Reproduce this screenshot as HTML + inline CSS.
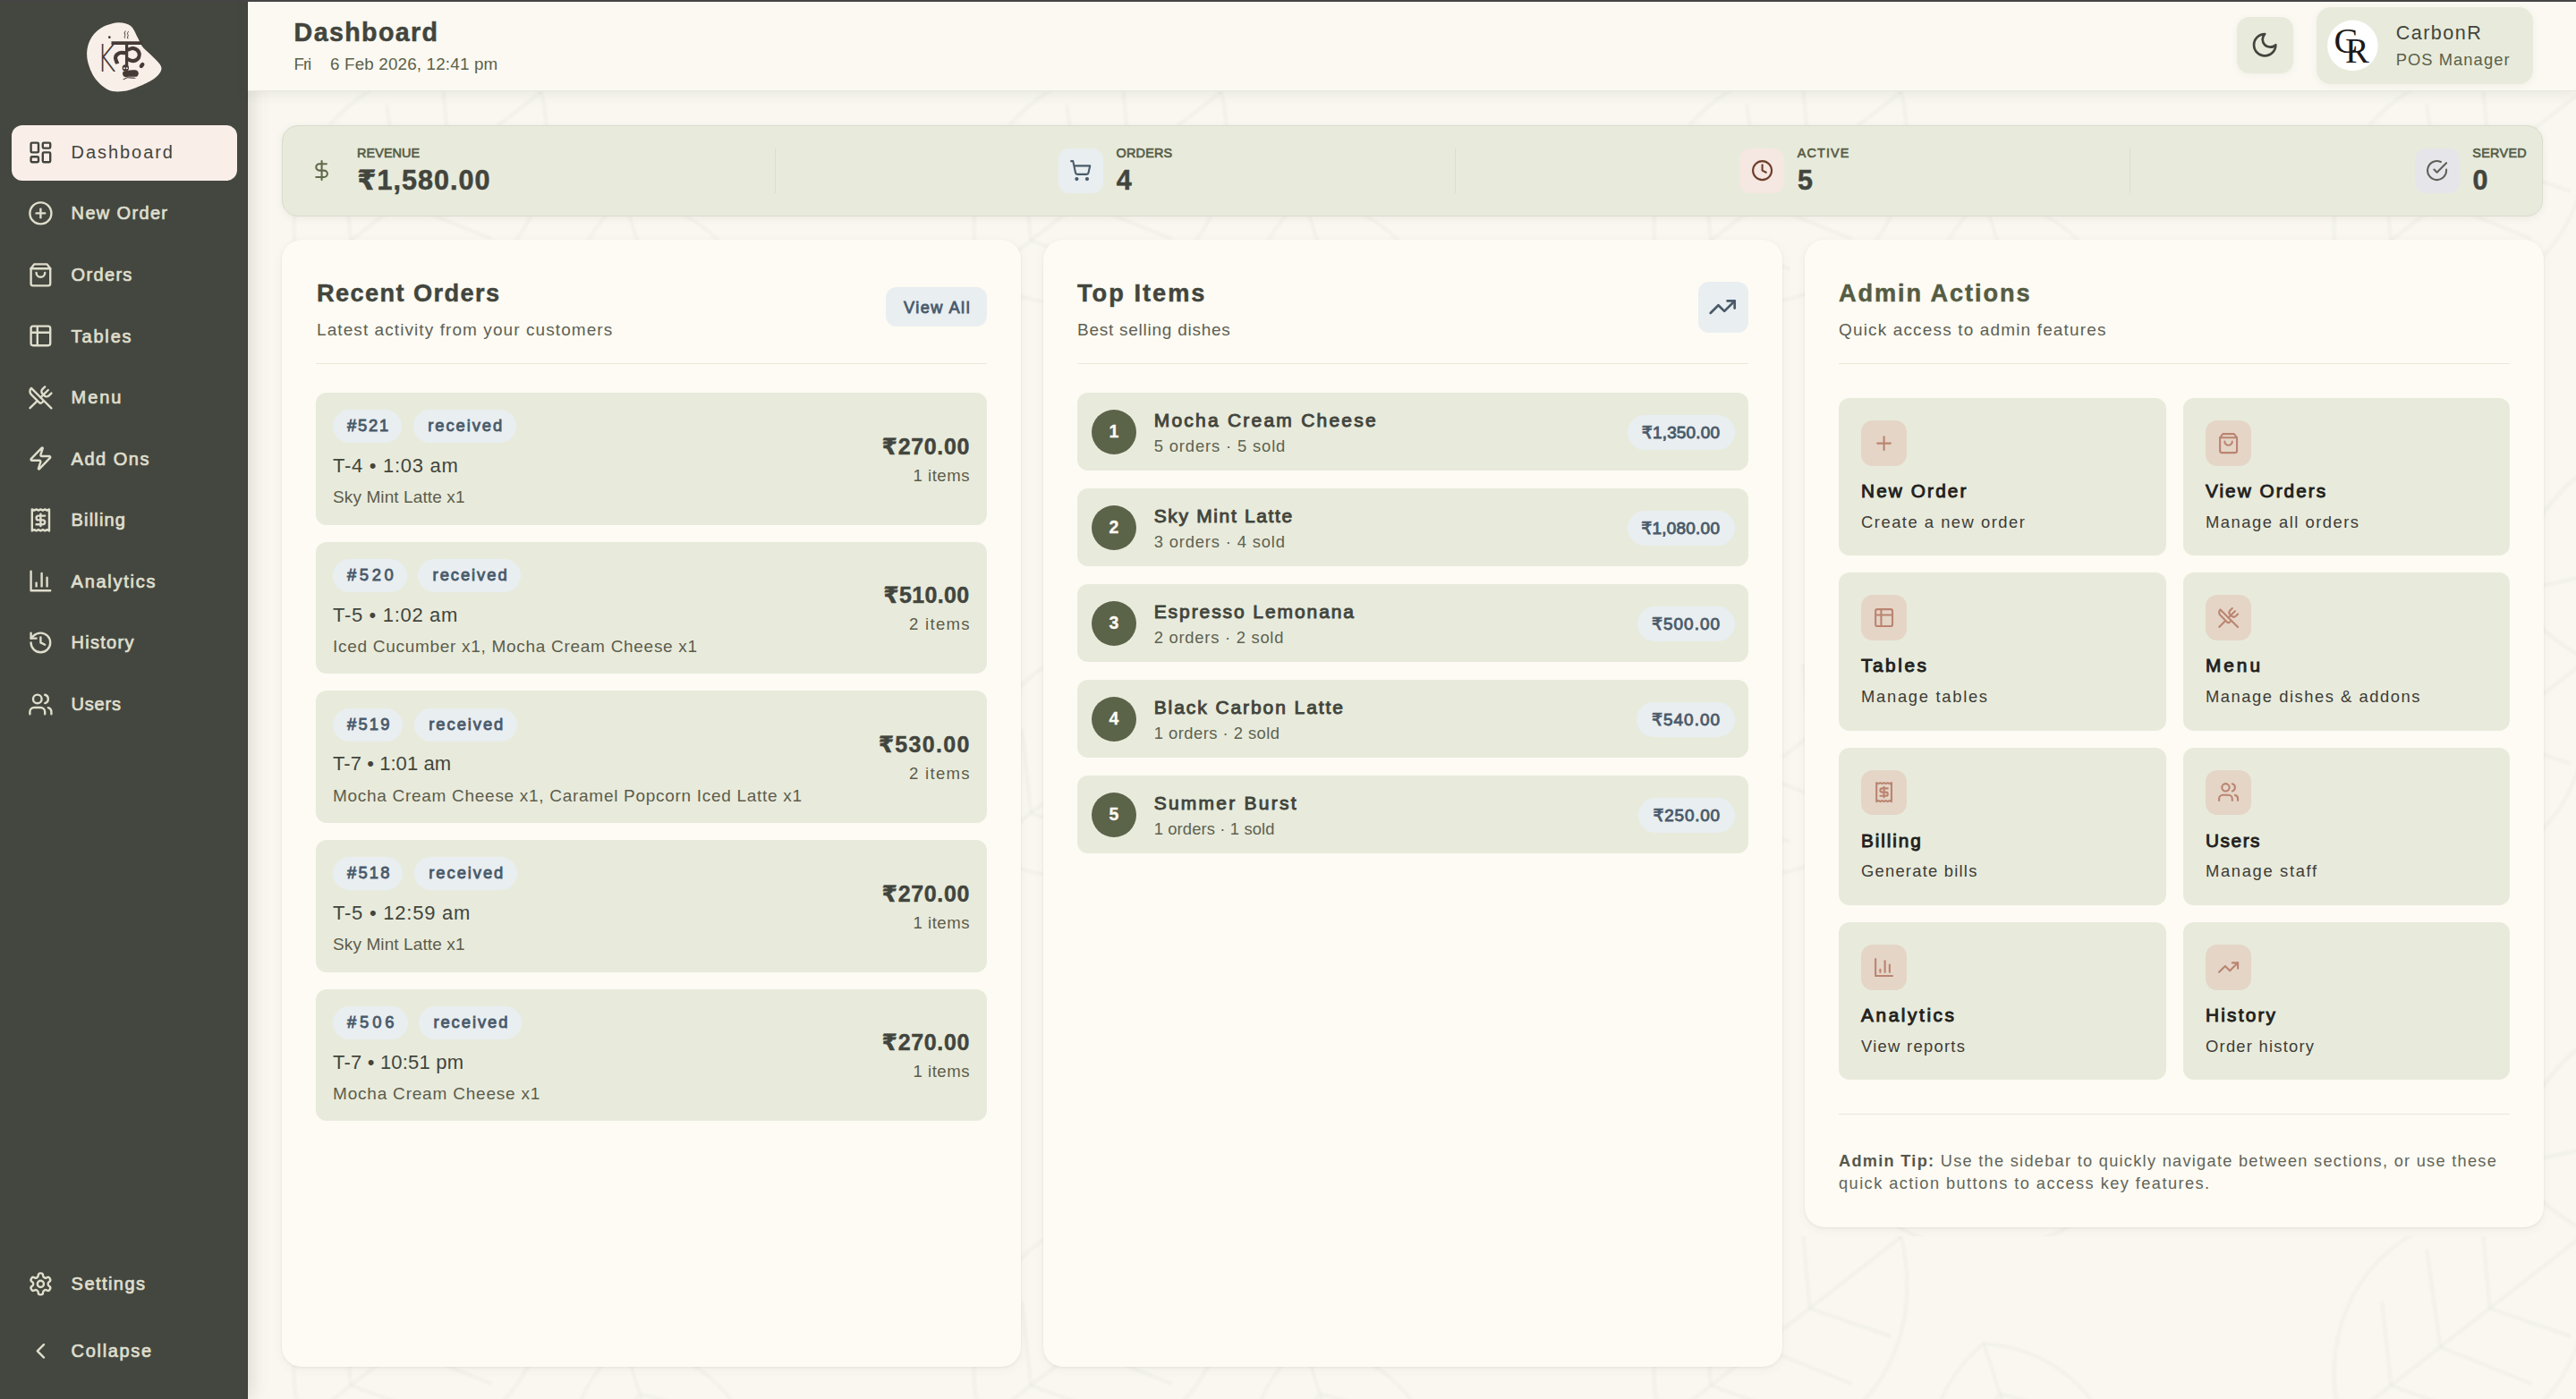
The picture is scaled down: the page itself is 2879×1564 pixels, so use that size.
<!DOCTYPE html>
<html lang="en">
<head>
<meta charset="utf-8">
<title>Dashboard</title>
<style>
html,body{margin:0;padding:0;background:#f9f7f0}
body{position:relative;width:2879px;height:1564px;overflow:hidden;background:#f9f7f0;font-family:"Liberation Sans","DejaVu Sans",sans-serif;-webkit-font-smoothing:antialiased}
.b{position:absolute;box-sizing:border-box}
.t{position:absolute;white-space:nowrap;margin:0}
.rs{font-family:"DejaVu Sans",sans-serif}
.ic{position:absolute;fill:none;stroke:currentColor;stroke-linecap:round;stroke-linejoin:round;overflow:visible}
.side{box-shadow:3px 0 20px rgba(70,75,50,.18)}
.head{border-bottom:1px solid #e9e8dd;box-shadow:0 3px 14px rgba(70,75,50,.09)}
.stats{border:1px solid #d9dccd;box-shadow:0 2px 8px rgba(90,85,60,.08)}
.card{box-shadow:0 1px 3px rgba(70,75,50,.08),0 3px 12px rgba(70,75,50,.05)}
.sh1{box-shadow:0 2px 8px rgba(90,85,60,.06)}
b{font-weight:700;color:#55574d}
</style>
</head>
<body>
<svg class="b" style="left:277px;top:102px;width:2602px;height:1462px" viewBox="0 0 2602 1462"><filter id="lfb" x="-10%" y="-10%" width="120%" height="120%"><feGaussianBlur stdDeviation="1.3"/></filter><pattern id="lfp" width="760" height="640" patternUnits="userSpaceOnUse"><g fill="none" stroke="#7d8064" stroke-opacity=".05" stroke-width="3.6" filter="url(#lfb)"><g transform="translate(60 210) rotate(-38)"><path d="M0 0C60-150 260-170 340 0C260 170 60 150 0 0Z"/><path d="M0 0H340"/><path d="M70 0 120-80M140 0 195-95M210 0 262-80M70 0 120 80M140 0 195 95M210 0 262 80"/></g><g transform="translate(420 120) rotate(72) scale(.85)"><path d="M0 0C60-150 260-170 340 0C260 170 60 150 0 0Z"/><path d="M0 0H340"/><path d="M70 0 120-80M140 0 195-95M210 0 262-80M70 0 120 80M140 0 195 95M210 0 262 80"/></g><g transform="translate(250 560) rotate(-12) scale(1.1)"><path d="M0 0C60-150 260-170 340 0C260 170 60 150 0 0Z"/><path d="M0 0H340"/><path d="M70 0 120-80M140 0 195-95M210 0 262-80M70 0 120 80M140 0 195 95M210 0 262 80"/></g><g transform="translate(700 520) rotate(200) scale(.8)"><path d="M0 0C60-150 260-170 340 0C260 170 60 150 0 0Z"/><path d="M0 0H340"/><path d="M70 0 120-80M140 0 195-95M210 0 262-80M70 0 120 80M140 0 195 95M210 0 262 80"/></g></g></pattern><rect width="2602" height="1462" fill="url(#lfp)"/></svg>
<aside>
<div class="b side" style="left:0.0px;top:0.0px;width:277.0px;height:1564.0px;background:#44473f;border-right:1px solid #393c35;"></div>
<svg class="b" style="left:90px;top:20px;width:100px;height:90px" viewBox="90 20 100 90"><path d="M131.2 25.3C136.8 24.8 142.1 26.1 145.8 28.7C149.5 31.4 151.4 37.4 153.5 41.2C155.7 45.0 156.4 48.3 158.7 51.5C160.9 54.6 163.9 56.6 167.2 60.1C170.6 63.5 176.7 68.8 178.8 72.1C180.9 75.4 180.9 77.1 179.7 79.8C178.5 82.5 175.7 85.5 171.5 88.4C167.3 91.2 160.1 94.7 154.4 96.9C148.7 99.2 142.9 101.6 137.2 102.1C131.5 102.6 125.4 102.7 120.1 99.9C114.7 97.2 108.8 91.7 105.0 85.8C101.3 79.9 98.1 71.1 97.3 64.3C96.5 57.6 97.8 50.9 100.3 45.5C102.8 40.0 107.2 35.1 112.3 31.7C117.5 28.4 125.6 25.8 131.2 25.3Z" fill="#f8efe9"/><g fill="none" stroke="#463a36" stroke-linecap="round" stroke-linejoin="round"><path stroke-width="3.6" stroke-linecap="butt" d="M124.5 48.1H158.8"/><path stroke-width="3.3" stroke-linecap="butt" d="M141.6 49V75"/><path stroke-width="4.2" stroke-linecap="butt" d="M142.4 55.8C143.5 55.5 147.1 53.6 149.2 54.0C151.4 54.5 154.4 56.5 155.2 58.3C156.1 60.2 155.5 63.6 154.4 65.2C153.2 66.8 150.4 68.1 148.4 68.2C146.4 68.3 143.4 66.4 142.4 66.1"/><path stroke-width="4.2" stroke-linecap="butt" d="M140.2 59.2C139.1 59.2 135.6 58.4 133.8 59.2C131.9 60.0 129.5 61.9 129.1 63.9C128.6 65.9 130.9 70.0 131.2 71.2"/><path stroke-width="1" d="M139.5 42.5c-1.5-1.5 1.5-3 0-4.5s1-2.5 .8-3.2M142.8 43c-1.5-1.5 1.5-3 0-4.5s1-2.5 .8-3.2"/><path stroke-width="1.1" d="M138.1 88.8C138.8 88.5 140.2 87.1 142.4 86.8C144.5 86.6 149.5 87.3 150.9 87.3"/></g><text x="0" y="0" transform="translate(108.2 79.6) scale(.74 1)" font-family="DejaVu Sans Light,DejaVu Sans,sans-serif" font-weight="200" font-size="43.5" fill="#463a36">K</text><g fill="#463a36"><circle cx="140.3" cy="76" r="3.7"/><path d="M137.6 80.2C138.9 79.1 143.4 78.8 145.8 78.5C148.2 78.2 150.7 78.0 152.2 78.5C153.7 79.0 154.7 80.4 154.8 81.5C154.9 82.6 154.6 84.6 153.1 85.4C151.6 86.1 148.2 85.8 145.8 85.8C143.4 85.8 139.9 86.3 138.5 85.4C137.1 84.4 136.4 81.4 137.6 80.2Z"/><ellipse cx="158.6" cy="73" rx="2.3" ry="3.4" transform="rotate(35 158.6 73)"/><circle cx="122.3" cy="41.7" r="1.4"/></g><g fill="#f8efe9"><circle cx="138.9" cy="76.3" r="1"/><circle cx="141.8" cy="76.3" r="1"/></g></svg>
<nav>
<div class="b" style="left:13.0px;top:140.0px;width:252.0px;height:62.0px;background:#faeee9;border-radius:12px;"></div>
<svg class="ic" style="left:30.7px;top:155.6px;width:28.8px;height:28.8px;color:#42453d;stroke-width:2" viewBox="0 0 24 24"><rect width="7" height="9" x="3" y="3" rx="1"/><rect width="7" height="5" x="14" y="3" rx="1"/><rect width="7" height="9" x="14" y="12" rx="1"/><rect width="7" height="5" x="3" y="16" rx="1"/></svg>
<div id="t1" class="t" style="top:160px;font-size:20.0px;line-height:20.0px;color:#42453d;letter-spacing:1.94px;left:79.6px;">Dashboard</div>
<svg class="ic" style="left:30.7px;top:224.2px;width:28.8px;height:28.8px;color:#dfdecd;stroke-width:2" viewBox="0 0 24 24"><circle cx="12" cy="12" r="10"/><path d="M8 12h8"/><path d="M12 8v8"/></svg>
<div id="t2" class="t" style="top:228px;font-size:20.0px;line-height:20.0px;-webkit-text-stroke:0.72px currentColor;color:#dfdecd;letter-spacing:1.34px;left:79.6px;">New Order</div>
<svg class="ic" style="left:30.7px;top:292.7px;width:28.8px;height:28.8px;color:#dfdecd;stroke-width:2" viewBox="0 0 24 24"><path d="M6 2 3 6v14a2 2 0 0 0 2 2h14a2 2 0 0 0 2-2V6l-3-4Z"/><path d="M3 6h18"/><path d="M16 10a4 4 0 0 1-8 0"/></svg>
<div id="t3" class="t" style="top:297px;font-size:20.0px;line-height:20.0px;-webkit-text-stroke:0.72px currentColor;color:#dfdecd;letter-spacing:1.33px;left:79.6px;">Orders</div>
<svg class="ic" style="left:30.7px;top:361.2px;width:28.8px;height:28.8px;color:#dfdecd;stroke-width:2" viewBox="0 0 24 24"><path d="M9 3H5a2 2 0 0 0-2 2v4m6-6h10a2 2 0 0 1 2 2v4M9 3v18m0 0h10a2 2 0 0 0 2-2V9M9 21H5a2 2 0 0 1-2-2V9m0 0h18"/></svg>
<div id="t4" class="t" style="top:366px;font-size:20.0px;line-height:20.0px;-webkit-text-stroke:0.72px currentColor;color:#dfdecd;letter-spacing:1.84px;left:79.6px;">Tables</div>
<svg class="ic" style="left:30.7px;top:429.8px;width:28.8px;height:28.8px;color:#dfdecd;stroke-width:2" viewBox="0 0 24 24"><path d="m16 2-2.3 2.3a3 3 0 0 0 0 4.2l1.8 1.8a3 3 0 0 0 4.2 0L22 8"/><path d="M15 15 3.3 3.3a4.2 4.2 0 0 0 0 6l7.3 7.3c.7.7 2 .7 2.8 0L15 15Zm0 0 7 7"/><path d="m2.1 21.8 6.4-6.3"/><path d="m19 5-7 7"/></svg>
<div id="t5" class="t" style="top:434px;font-size:20.0px;line-height:20.0px;-webkit-text-stroke:0.72px currentColor;color:#dfdecd;letter-spacing:1.92px;left:79.6px;">Menu</div>
<svg class="ic" style="left:30.7px;top:498.4px;width:28.8px;height:28.8px;color:#dfdecd;stroke-width:2" viewBox="0 0 24 24"><path d="M4 14a1 1 0 0 1-.78-1.63l9.9-10.2a.5.5 0 0 1 .86.46l-1.92 6.02A1 1 0 0 0 13 10h7a1 1 0 0 1 .78 1.63l-9.9 10.2a.5.5 0 0 1-.86-.46l1.92-6.02A1 1 0 0 0 11 14z"/></svg>
<div id="t6" class="t" style="top:503px;font-size:20.0px;line-height:20.0px;-webkit-text-stroke:0.72px currentColor;color:#dfdecd;letter-spacing:1.50px;left:79.6px;">Add Ons</div>
<svg class="ic" style="left:30.7px;top:566.9px;width:28.8px;height:28.8px;color:#dfdecd;stroke-width:2" viewBox="0 0 24 24"><path d="M4 2v20l2-1 2 1 2-1 2 1 2-1 2 1 2-1 2 1V2l-2 1-2-1-2 1-2-1-2 1-2-1-2 1Z"/><path d="M16 8h-6a2 2 0 1 0 0 4h4a2 2 0 1 1 0 4H8"/><path d="M12 17.5v-11"/></svg>
<div id="t7" class="t" style="top:571px;font-size:20.0px;line-height:20.0px;-webkit-text-stroke:0.72px currentColor;color:#dfdecd;letter-spacing:1.16px;left:79.6px;">Billing</div>
<svg class="ic" style="left:30.7px;top:635.4px;width:28.8px;height:28.8px;color:#dfdecd;stroke-width:2" viewBox="0 0 24 24"><path d="M3 3v18h18"/><path d="M18 17V9"/><path d="M13 17V5"/><path d="M8 17v-3"/></svg>
<div id="t8" class="t" style="top:640px;font-size:20.0px;line-height:20.0px;-webkit-text-stroke:0.72px currentColor;color:#dfdecd;letter-spacing:1.72px;left:79.6px;">Analytics</div>
<svg class="ic" style="left:30.7px;top:704.0px;width:28.8px;height:28.8px;color:#dfdecd;stroke-width:2" viewBox="0 0 24 24"><path d="M3 12a9 9 0 1 0 9-9 9.75 9.75 0 0 0-6.74 2.74L3 8"/><path d="M3 3v5h5"/><path d="M12 7v5l4 2"/></svg>
<div id="t9" class="t" style="top:708px;font-size:20.0px;line-height:20.0px;-webkit-text-stroke:0.72px currentColor;color:#dfdecd;letter-spacing:1.26px;left:79.6px;">History</div>
<svg class="ic" style="left:30.7px;top:772.5px;width:28.8px;height:28.8px;color:#dfdecd;stroke-width:2" viewBox="0 0 24 24"><path d="M16 21v-2a4 4 0 0 0-4-4H6a4 4 0 0 0-4 4v2"/><circle cx="9" cy="7" r="4"/><path d="M22 21v-2a4 4 0 0 0-3-3.87"/><path d="M16 3.13a4 4 0 0 1 0 7.75"/></svg>
<div id="t10" class="t" style="top:777px;font-size:20.0px;line-height:20.0px;-webkit-text-stroke:0.72px currentColor;color:#dfdecd;letter-spacing:0.77px;left:79.6px;">Users</div>
</nav>
<svg class="ic" style="left:30.7px;top:1420.7px;width:28.8px;height:28.8px;color:#dfdecd;stroke-width:2" viewBox="0 0 24 24"><path d="M12.22 2h-.44a2 2 0 0 0-2 2v.18a2 2 0 0 1-1 1.73l-.43.25a2 2 0 0 1-2 0l-.15-.08a2 2 0 0 0-2.73.73l-.22.38a2 2 0 0 0 .73 2.73l.15.1a2 2 0 0 1 1 1.72v.51a2 2 0 0 1-1 1.74l-.15.09a2 2 0 0 0-.73 2.73l.22.38a2 2 0 0 0 2.73.73l.15-.08a2 2 0 0 1 2 0l.43.25a2 2 0 0 1 1 1.73V20a2 2 0 0 0 2 2h.44a2 2 0 0 0 2-2v-.18a2 2 0 0 1 1-1.73l.43-.25a2 2 0 0 1 2 0l.15.08a2 2 0 0 0 2.73-.73l.22-.39a2 2 0 0 0-.73-2.73l-.15-.08a2 2 0 0 1-1-1.74v-.5a2 2 0 0 1 1-1.74l.15-.09a2 2 0 0 0 .73-2.73l-.22-.38a2 2 0 0 0-2.73-.73l-.15.08a2 2 0 0 1-2 0l-.43-.25a2 2 0 0 1-1-1.73V4a2 2 0 0 0-2-2z"/><circle cx="12" cy="12" r="3"/></svg>
<div id="t11" class="t" style="top:1425px;font-size:20.0px;line-height:20.0px;-webkit-text-stroke:0.72px currentColor;color:#dfdecd;letter-spacing:1.45px;left:79.6px;">Settings</div>
<svg class="ic" style="left:30.8px;top:1495.9px;width:28.8px;height:28.8px;color:#dfdecd;stroke-width:2" viewBox="0 0 24 24"><path d="m15 18-6-6 6-6"/></svg>
<div id="t12" class="t" style="top:1500px;font-size:20.0px;line-height:20.0px;-webkit-text-stroke:0.72px currentColor;color:#dfdecd;letter-spacing:1.68px;left:79.6px;">Collapse</div>
</aside>
<header>
<div class="b head" style="left:277.0px;top:0.0px;width:2602.0px;height:102.0px;background:#fbf9f2;"></div>
<div id="t13" class="t" style="top:22px;font-size:28.6px;line-height:28.6px;font-weight:700;-webkit-text-stroke:0.49px currentColor;color:#42453d;letter-spacing:1.39px;left:328.6px;">Dashboard</div>
<div id="t14" class="t" style="top:63px;font-size:18.8px;line-height:18.8px;color:#5b6149;letter-spacing:-1.10px;left:328.6px;">Fri</div>
<div id="t15" class="t" style="top:63px;font-size:18.8px;line-height:18.8px;color:#5b6149;letter-spacing:0.18px;left:369.0px;">6 Feb 2026, 12:41 pm</div>
<div class="b sh1" style="left:2500.0px;top:19.0px;width:63.0px;height:63.0px;background:#e8ebdc;border-radius:14px;"></div>
<svg class="ic" style="left:2515.3px;top:34.3px;width:32.4px;height:32.4px;color:#42453d;stroke-width:2" viewBox="0 0 24 24"><path d="M12 3a6 6 0 0 0 9 9 9 9 0 1 1-9-9Z"/></svg>
<div class="b sh1" style="left:2589.0px;top:8.0px;width:242.0px;height:86.0px;background:#e8ebdc;border-radius:16px;"></div>
<svg class="b" style="left:2600px;top:22px;width:59px;height:58px" viewBox="2600 22 59 58"><circle cx="2629.4" cy="50.9" r="28.3" fill="#fff"/><g font-family="Liberation Serif,DejaVu Serif,serif" font-size="40" fill="#1c1919"><text x="2608.6" y="58.6">C</text><text x="2621" y="70.2">R</text></g></svg>
<div id="t16" class="t" style="top:26px;font-size:21.6px;line-height:21.6px;color:#42453d;letter-spacing:1.45px;left:2677.7px;">CarbonR</div>
<div id="t17" class="t" style="top:58px;font-size:18.4px;line-height:18.4px;color:#5b6149;letter-spacing:1.03px;left:2677.7px;">POS Manager</div>
</header>
<div class="b" style="left:0.0px;top:0.0px;width:2879.0px;height:1.9px;background:#474446;"></div>
<main>
<section>
<div class="b stats" style="left:315.0px;top:140.0px;width:2527.0px;height:101.5px;background:#e8ebdc;border-radius:18px;"></div>
<svg class="ic" style="left:346.9px;top:178.0px;width:25.2px;height:25.2px;color:#5f6a4b;stroke-width:2" viewBox="0 0 24 24"><path d="M12 2v20"/><path d="M17 5H9.5a3.5 3.5 0 0 0 0 7h5a3.5 3.5 0 0 1 0 7H6"/></svg>
<div id="t18" class="t" style="top:164px;font-size:14.4px;line-height:14.4px;-webkit-text-stroke:0.65px currentColor;color:#565c45;letter-spacing:0.10px;left:399.0px;">REVENUE</div>
<div id="t19" class="t" style="top:186px;font-size:30.5px;line-height:30.5px;font-weight:700;-webkit-text-stroke:0.52px currentColor;color:#42453d;letter-spacing:1.05px;left:399.2px;"><span class="rs">₹</span>1,580.00</div>
<div class="b" style="left:1183.0px;top:165.8px;width:50.0px;height:50.0px;background:#e9eef1;border-radius:12px;"></div>
<svg class="ic" style="left:1195.4px;top:178.0px;width:25.2px;height:25.2px;color:#495a6a;stroke-width:2" viewBox="0 0 24 24"><circle cx="8" cy="21" r="1"/><circle cx="19" cy="21" r="1"/><path d="M2.05 2.05h2l2.66 12.42a2 2 0 0 0 2 1.58h9.78a2 2 0 0 0 1.95-1.57l1.65-7.43H5.12"/></svg>
<div id="t20" class="t" style="top:164px;font-size:14.4px;line-height:14.4px;-webkit-text-stroke:0.65px currentColor;color:#565c45;letter-spacing:0.22px;left:1247.5px;">ORDERS</div>
<div id="t21" class="t" style="top:186px;font-size:30.5px;line-height:30.5px;font-weight:700;-webkit-text-stroke:0.52px currentColor;color:#42453d;left:1247.7px;">4</div>
<div class="b" style="left:1944.3px;top:165.8px;width:50.0px;height:50.0px;background:#f5e7e1;border-radius:12px;"></div>
<svg class="ic" style="left:1956.7px;top:178.0px;width:25.2px;height:25.2px;color:#6e3d2c;stroke-width:2" viewBox="0 0 24 24"><circle cx="12" cy="12" r="10"/><path d="M12 6v6l4 2"/></svg>
<div id="t22" class="t" style="top:164px;font-size:14.4px;line-height:14.4px;-webkit-text-stroke:0.65px currentColor;color:#565c45;letter-spacing:1.10px;left:2008.8px;">ACTIVE</div>
<div id="t23" class="t" style="top:186px;font-size:30.5px;line-height:30.5px;font-weight:700;-webkit-text-stroke:0.52px currentColor;color:#42453d;left:2009.0px;">5</div>
<div class="b" style="left:2698.8px;top:165.8px;width:50.0px;height:50.0px;background:#e6e5ea;border-radius:12px;"></div>
<svg class="ic" style="left:2711.2px;top:178.0px;width:25.2px;height:25.2px;color:#5d6058;stroke-width:2" viewBox="0 0 24 24"><path d="M22 11.08V12a10 10 0 1 1-5.93-9.14"/><path d="m9 11 3 3L22 4"/></svg>
<div id="t24" class="t" style="top:164px;font-size:14.4px;line-height:14.4px;-webkit-text-stroke:0.65px currentColor;color:#565c45;letter-spacing:0.30px;left:2763.3px;">SERVED</div>
<div id="t25" class="t" style="top:186px;font-size:30.5px;line-height:30.5px;font-weight:700;-webkit-text-stroke:0.52px currentColor;color:#42453d;left:2763.5px;">0</div>
<div class="b" style="left:865.5px;top:166.0px;width:1.5px;height:50.0px;background:#d7dfd6;"></div>
<div class="b" style="left:1625.5px;top:166.0px;width:1.5px;height:50.0px;background:#d7dfd6;"></div>
<div class="b" style="left:2379.5px;top:166.0px;width:1.5px;height:50.0px;background:#d7dfd6;"></div>
</section>
<section>
<div class="b card" style="left:315.0px;top:268.0px;width:826.0px;height:1259.5px;background:#fdfbf3;border-radius:22px;"></div>
<div id="t26" class="t" style="top:314px;font-size:27.2px;line-height:27.2px;font-weight:700;-webkit-text-stroke:0.46px currentColor;color:#42453d;letter-spacing:1.39px;left:354.0px;">Recent Orders</div>
<div id="t27" class="t" style="top:359px;font-size:19.0px;line-height:19.0px;color:#5d6053;letter-spacing:1.08px;left:354.0px;">Latest activity from your customers</div>
<div class="b" style="left:989.7px;top:321.0px;width:113.0px;height:44.0px;background:#e9eef1;border-radius:12px;"></div>
<div id="t28" class="t" style="top:335px;font-size:18.2px;line-height:18.2px;-webkit-text-stroke:0.82px currentColor;color:#495a6a;letter-spacing:1.49px;left:1009.9px;">View All</div>
<div class="b" style="left:353.0px;top:406.0px;width:749.7px;height:1.2px;background:#e9e7dc;"></div>
<article>
<div class="b" style="left:353.0px;top:439.0px;width:749.7px;height:147.6px;background:#e8ebdc;border-radius:12px;"></div>
<div class="b" style="left:372.0px;top:458.3px;width:77.3px;height:37.0px;background:#e9eef1;border-radius:19px;"></div>
<div id="t29" class="t" style="top:467px;font-size:18.4px;line-height:18.4px;-webkit-text-stroke:0.83px currentColor;color:#495a6a;letter-spacing:1.79px;left:388.0px;">#521</div>
<div class="b" style="left:461.7px;top:458.3px;width:115.2px;height:37.0px;background:#e9eef1;border-radius:19px;"></div>
<div id="t30" class="t" style="top:467px;font-size:18.4px;line-height:18.4px;-webkit-text-stroke:0.83px currentColor;color:#495a6a;letter-spacing:1.93px;left:478.2px;">received</div>
<div id="t31" class="t" style="top:510px;font-size:22.0px;line-height:22.0px;color:#42453d;letter-spacing:0.72px;left:372.0px;">T-4 • 1:03 am</div>
<div id="t32" class="t" style="top:546px;font-size:19.0px;line-height:19.0px;color:#5d5c4b;letter-spacing:0.11px;left:372.0px;">Sky Mint Latte x1</div>
<div id="t33" class="t" style="top:487px;font-size:25.0px;line-height:25.0px;font-weight:700;-webkit-text-stroke:0.43px currentColor;color:#42453d;letter-spacing:0.65px;right:1795.0px;"><span class="rs">₹</span>270.00</div>
<div id="t34" class="t" style="top:523px;font-size:18.6px;line-height:18.6px;color:#5e5c49;letter-spacing:0.51px;right:1795.0px;">1 items</div>
</article>
<article>
<div class="b" style="left:353.0px;top:605.7px;width:749.7px;height:147.6px;background:#e8ebdc;border-radius:12px;"></div>
<div class="b" style="left:372.0px;top:625.0px;width:82.7px;height:37.0px;background:#e9eef1;border-radius:19px;"></div>
<div id="t35" class="t" style="top:634px;font-size:18.4px;line-height:18.4px;-webkit-text-stroke:0.83px currentColor;color:#495a6a;letter-spacing:3.59px;left:388.0px;">#520</div>
<div class="b" style="left:467.1px;top:625.0px;width:115.2px;height:37.0px;background:#e9eef1;border-radius:19px;"></div>
<div id="t36" class="t" style="top:634px;font-size:18.4px;line-height:18.4px;-webkit-text-stroke:0.83px currentColor;color:#495a6a;letter-spacing:1.93px;left:483.6px;">received</div>
<div id="t37" class="t" style="top:677px;font-size:22.0px;line-height:22.0px;color:#42453d;letter-spacing:0.68px;left:372.0px;">T-5 • 1:02 am</div>
<div id="t38" class="t" style="top:713px;font-size:19.0px;line-height:19.0px;color:#5d5c4b;letter-spacing:0.71px;left:372.0px;">Iced Cucumber x1, Mocha Cream Cheese x1</div>
<div id="t39" class="t" style="top:653px;font-size:25.0px;line-height:25.0px;font-weight:700;-webkit-text-stroke:0.43px currentColor;color:#42453d;letter-spacing:0.34px;right:1795.4px;"><span class="rs">₹</span>510.00</div>
<div id="t40" class="t" style="top:689px;font-size:18.6px;line-height:18.6px;color:#5e5c49;letter-spacing:1.26px;right:1794.2px;">2 items</div>
</article>
<article>
<div class="b" style="left:353.0px;top:772.4px;width:749.7px;height:147.6px;background:#e8ebdc;border-radius:12px;"></div>
<div class="b" style="left:372.0px;top:791.7px;width:78.4px;height:37.0px;background:#e9eef1;border-radius:19px;"></div>
<div id="t41" class="t" style="top:801px;font-size:18.4px;line-height:18.4px;-webkit-text-stroke:0.83px currentColor;color:#495a6a;letter-spacing:2.16px;left:388.0px;">#519</div>
<div class="b" style="left:462.8px;top:791.7px;width:115.2px;height:37.0px;background:#e9eef1;border-radius:19px;"></div>
<div id="t42" class="t" style="top:801px;font-size:18.4px;line-height:18.4px;-webkit-text-stroke:0.83px currentColor;color:#495a6a;letter-spacing:1.93px;left:479.3px;">received</div>
<div id="t43" class="t" style="top:843px;font-size:22.0px;line-height:22.0px;color:#42453d;letter-spacing:0.07px;left:372.0px;">T-7 • 1:01 am</div>
<div id="t44" class="t" style="top:880px;font-size:19.0px;line-height:19.0px;color:#5d5c4b;letter-spacing:0.71px;left:372.0px;">Mocha Cream Cheese x1, Caramel Popcorn Iced Latte x1</div>
<div id="t45" class="t" style="top:820px;font-size:25.0px;line-height:25.0px;font-weight:700;-webkit-text-stroke:0.43px currentColor;color:#42453d;letter-spacing:1.30px;right:1794.4px;"><span class="rs">₹</span>530.00</div>
<div id="t46" class="t" style="top:856px;font-size:18.6px;line-height:18.6px;color:#5e5c49;letter-spacing:1.26px;right:1794.2px;">2 items</div>
</article>
<article>
<div class="b" style="left:353.0px;top:939.1px;width:749.7px;height:147.6px;background:#e8ebdc;border-radius:12px;"></div>
<div class="b" style="left:372.0px;top:958.4px;width:78.4px;height:37.0px;background:#e9eef1;border-radius:19px;"></div>
<div id="t47" class="t" style="top:967px;font-size:18.4px;line-height:18.4px;-webkit-text-stroke:0.83px currentColor;color:#495a6a;letter-spacing:2.16px;left:388.0px;">#518</div>
<div class="b" style="left:462.8px;top:958.4px;width:115.2px;height:37.0px;background:#e9eef1;border-radius:19px;"></div>
<div id="t48" class="t" style="top:967px;font-size:18.4px;line-height:18.4px;-webkit-text-stroke:0.83px currentColor;color:#495a6a;letter-spacing:1.93px;left:479.3px;">received</div>
<div id="t49" class="t" style="top:1010px;font-size:22.0px;line-height:22.0px;color:#42453d;letter-spacing:0.76px;left:372.0px;">T-5 • 12:59 am</div>
<div id="t50" class="t" style="top:1046px;font-size:19.0px;line-height:19.0px;color:#5d5c4b;letter-spacing:0.11px;left:372.0px;">Sky Mint Latte x1</div>
<div id="t51" class="t" style="top:987px;font-size:25.0px;line-height:25.0px;font-weight:700;-webkit-text-stroke:0.43px currentColor;color:#42453d;letter-spacing:0.65px;right:1795.0px;"><span class="rs">₹</span>270.00</div>
<div id="t52" class="t" style="top:1023px;font-size:18.6px;line-height:18.6px;color:#5e5c49;letter-spacing:0.51px;right:1795.0px;">1 items</div>
</article>
<article>
<div class="b" style="left:353.0px;top:1105.8px;width:749.7px;height:147.6px;background:#e8ebdc;border-radius:12px;"></div>
<div class="b" style="left:372.0px;top:1125.1px;width:83.5px;height:37.0px;background:#e9eef1;border-radius:19px;"></div>
<div id="t53" class="t" style="top:1134px;font-size:18.4px;line-height:18.4px;-webkit-text-stroke:0.83px currentColor;color:#495a6a;letter-spacing:3.86px;left:388.0px;">#506</div>
<div class="b" style="left:467.9px;top:1125.1px;width:115.2px;height:37.0px;background:#e9eef1;border-radius:19px;"></div>
<div id="t54" class="t" style="top:1134px;font-size:18.4px;line-height:18.4px;-webkit-text-stroke:0.83px currentColor;color:#495a6a;letter-spacing:1.93px;left:484.4px;">received</div>
<div id="t55" class="t" style="top:1177px;font-size:22.0px;line-height:22.0px;color:#42453d;letter-spacing:0.20px;left:372.0px;">T-7 • 10:51 pm</div>
<div id="t56" class="t" style="top:1213px;font-size:19.0px;line-height:19.0px;color:#5d5c4b;letter-spacing:0.80px;left:372.0px;">Mocha Cream Cheese x1</div>
<div id="t57" class="t" style="top:1153px;font-size:25.0px;line-height:25.0px;font-weight:700;-webkit-text-stroke:0.43px currentColor;color:#42453d;letter-spacing:0.65px;right:1795.0px;"><span class="rs">₹</span>270.00</div>
<div id="t58" class="t" style="top:1189px;font-size:18.6px;line-height:18.6px;color:#5e5c49;letter-spacing:0.51px;right:1795.0px;">1 items</div>
</article>
</section>
<section>
<div class="b card" style="left:1166.0px;top:268.0px;width:825.6px;height:1259.5px;background:#fdfbf3;border-radius:22px;"></div>
<div id="t59" class="t" style="top:314px;font-size:27.2px;line-height:27.2px;font-weight:700;-webkit-text-stroke:0.46px currentColor;color:#42453d;letter-spacing:2.01px;left:1204.0px;">Top Items</div>
<div id="t60" class="t" style="top:359px;font-size:19.0px;line-height:19.0px;color:#5d6053;letter-spacing:0.75px;left:1204.0px;">Best selling dishes</div>
<div class="b" style="left:1897.7px;top:315.0px;width:55.9px;height:56.5px;background:#e9eef1;border-radius:12px;"></div>
<svg class="ic" style="left:1909.4px;top:327.0px;width:32.4px;height:32.4px;color:#495a6a;stroke-width:2" viewBox="0 0 24 24"><path d="M22 7 13.5 15.5 8.5 10.5 2 17"/><path d="M16 7h6v6"/></svg>
<div class="b" style="left:1204.0px;top:406.0px;width:749.6px;height:1.2px;background:#e9e7dc;"></div>
<article>
<div class="b" style="left:1204.0px;top:439.0px;width:749.6px;height:87.4px;background:#e8ebdc;border-radius:12px;"></div>
<div class="b" style="left:1219.6px;top:458.0px;width:50.4px;height:49.6px;background:#5b6349;border-radius:25px;"></div>
<div id="t61" class="t" style="top:473px;font-size:19.5px;line-height:19.5px;font-weight:700;-webkit-text-stroke:0.33px currentColor;color:#fdfbf3;left:1219.8px;width:50.3px;text-align:center;">1</div>
<div id="t62" class="t" style="top:459px;font-size:21.0px;line-height:21.0px;-webkit-text-stroke:0.94px currentColor;color:#42453d;letter-spacing:2.23px;left:1289.7px;">Mocha Cream Cheese</div>
<div id="t63" class="t" style="top:490px;font-size:18.4px;line-height:18.4px;color:#5e6250;letter-spacing:0.86px;left:1289.7px;">5 orders · 5 sold</div>
<div class="b" style="left:1819.3px;top:463.9px;width:119.5px;height:39.2px;background:#e9eef1;border-radius:20px;"></div>
<div id="t64" class="t" style="top:474px;font-size:19.0px;line-height:19.0px;-webkit-text-stroke:0.85px currentColor;color:#495a6a;letter-spacing:0.14px;right:956.9px;"><span class="rs">₹</span>1,350.00</div>
</article>
<article>
<div class="b" style="left:1204.0px;top:546.0px;width:749.6px;height:87.4px;background:#e8ebdc;border-radius:12px;"></div>
<div class="b" style="left:1219.6px;top:565.0px;width:50.4px;height:49.6px;background:#5b6349;border-radius:25px;"></div>
<div id="t65" class="t" style="top:580px;font-size:19.5px;line-height:19.5px;font-weight:700;-webkit-text-stroke:0.33px currentColor;color:#fdfbf3;left:1219.8px;width:50.3px;text-align:center;">2</div>
<div id="t66" class="t" style="top:566px;font-size:21.0px;line-height:21.0px;-webkit-text-stroke:0.94px currentColor;color:#42453d;letter-spacing:1.65px;left:1289.7px;">Sky Mint Latte</div>
<div id="t67" class="t" style="top:597px;font-size:18.4px;line-height:18.4px;color:#5e6250;letter-spacing:0.84px;left:1289.7px;">3 orders · 4 sold</div>
<div class="b" style="left:1818.8px;top:570.9px;width:120.0px;height:39.2px;background:#e9eef1;border-radius:20px;"></div>
<div id="t68" class="t" style="top:581px;font-size:19.0px;line-height:19.0px;-webkit-text-stroke:0.85px currentColor;color:#495a6a;letter-spacing:0.22px;right:956.8px;"><span class="rs">₹</span>1,080.00</div>
</article>
<article>
<div class="b" style="left:1204.0px;top:653.0px;width:749.6px;height:87.4px;background:#e8ebdc;border-radius:12px;"></div>
<div class="b" style="left:1219.6px;top:672.0px;width:50.4px;height:49.6px;background:#5b6349;border-radius:25px;"></div>
<div id="t69" class="t" style="top:687px;font-size:19.5px;line-height:19.5px;font-weight:700;-webkit-text-stroke:0.33px currentColor;color:#fdfbf3;left:1219.8px;width:50.3px;text-align:center;">3</div>
<div id="t70" class="t" style="top:673px;font-size:21.0px;line-height:21.0px;-webkit-text-stroke:0.94px currentColor;color:#42453d;letter-spacing:1.92px;left:1289.7px;">Espresso Lemonana</div>
<div id="t71" class="t" style="top:704px;font-size:18.4px;line-height:18.4px;color:#5e6250;letter-spacing:0.74px;left:1289.7px;">2 orders · 2 sold</div>
<div class="b" style="left:1830.1px;top:677.9px;width:108.7px;height:39.2px;background:#e9eef1;border-radius:20px;"></div>
<div id="t72" class="t" style="top:688px;font-size:19.0px;line-height:19.0px;-webkit-text-stroke:0.85px currentColor;color:#495a6a;letter-spacing:0.98px;right:956.0px;"><span class="rs">₹</span>500.00</div>
</article>
<article>
<div class="b" style="left:1204.0px;top:760.0px;width:749.6px;height:87.4px;background:#e8ebdc;border-radius:12px;"></div>
<div class="b" style="left:1219.6px;top:779.0px;width:50.4px;height:49.6px;background:#5b6349;border-radius:25px;"></div>
<div id="t73" class="t" style="top:794px;font-size:19.5px;line-height:19.5px;font-weight:700;-webkit-text-stroke:0.33px currentColor;color:#fdfbf3;left:1219.8px;width:50.3px;text-align:center;">4</div>
<div id="t74" class="t" style="top:780px;font-size:21.0px;line-height:21.0px;-webkit-text-stroke:0.94px currentColor;color:#42453d;letter-spacing:1.92px;left:1289.7px;">Black Carbon Latte</div>
<div id="t75" class="t" style="top:811px;font-size:18.4px;line-height:18.4px;color:#5e6250;letter-spacing:0.47px;left:1289.7px;">1 orders · 2 sold</div>
<div class="b" style="left:1829.2px;top:784.9px;width:109.6px;height:39.2px;background:#e9eef1;border-radius:20px;"></div>
<div id="t76" class="t" style="top:795px;font-size:19.0px;line-height:19.0px;-webkit-text-stroke:0.85px currentColor;color:#495a6a;letter-spacing:0.98px;right:956.0px;"><span class="rs">₹</span>540.00</div>
</article>
<article>
<div class="b" style="left:1204.0px;top:867.0px;width:749.6px;height:87.4px;background:#e8ebdc;border-radius:12px;"></div>
<div class="b" style="left:1219.6px;top:886.0px;width:50.4px;height:49.6px;background:#5b6349;border-radius:25px;"></div>
<div id="t77" class="t" style="top:901px;font-size:19.5px;line-height:19.5px;font-weight:700;-webkit-text-stroke:0.33px currentColor;color:#fdfbf3;left:1219.8px;width:50.3px;text-align:center;">5</div>
<div id="t78" class="t" style="top:887px;font-size:21.0px;line-height:21.0px;-webkit-text-stroke:0.94px currentColor;color:#42453d;letter-spacing:2.25px;left:1289.7px;">Summer Burst</div>
<div id="t79" class="t" style="top:918px;font-size:18.4px;line-height:18.4px;color:#5e6250;letter-spacing:0.12px;left:1289.7px;">1 orders · 1 sold</div>
<div class="b" style="left:1831.3px;top:891.9px;width:107.5px;height:39.2px;background:#e9eef1;border-radius:20px;"></div>
<div id="t80" class="t" style="top:902px;font-size:19.0px;line-height:19.0px;-webkit-text-stroke:0.85px currentColor;color:#495a6a;letter-spacing:0.71px;right:956.3px;"><span class="rs">₹</span>250.00</div>
</article>
</section>
<section>
<div class="b card" style="left:2017.0px;top:268.0px;width:826.0px;height:1104.0px;background:#fdfbf3;border-radius:22px;"></div>
<div id="t81" class="t" style="top:314px;font-size:27.2px;line-height:27.2px;font-weight:700;-webkit-text-stroke:0.46px currentColor;color:#555c43;letter-spacing:1.89px;left:2055.0px;">Admin Actions</div>
<div id="t82" class="t" style="top:359px;font-size:19.0px;line-height:19.0px;color:#5d6053;letter-spacing:1.15px;left:2055.0px;">Quick access to admin features</div>
<div class="b" style="left:2055.0px;top:406.0px;width:750.0px;height:1.2px;background:#e9e7dc;"></div>
<article>
<div class="b" style="left:2055.0px;top:444.8px;width:366.0px;height:176.7px;background:#e8ebdc;border-radius:12px;"></div>
<div class="b" style="left:2080.0px;top:469.8px;width:50.9px;height:50.9px;background:#e4d5c7;border-radius:13px;"></div>
<svg class="ic" style="left:2092.8px;top:482.6px;width:25.2px;height:25.2px;color:#bb8471;stroke-width:2" viewBox="0 0 24 24"><path d="M5 12h14"/><path d="M12 5v14"/></svg>
<div id="t83" class="t" style="top:539px;font-size:20.8px;line-height:20.8px;-webkit-text-stroke:0.94px currentColor;color:#231f1e;letter-spacing:2.11px;left:2080.0px;">New Order</div>
<div id="t84" class="t" style="top:575px;font-size:18.4px;line-height:18.4px;color:#3e3b36;letter-spacing:1.50px;left:2080.0px;">Create a new order</div>
</article>
<article>
<div class="b" style="left:2440.0px;top:444.8px;width:365.0px;height:176.7px;background:#e8ebdc;border-radius:12px;"></div>
<div class="b" style="left:2465.0px;top:469.8px;width:50.9px;height:50.9px;background:#e4d5c7;border-radius:13px;"></div>
<svg class="ic" style="left:2477.8px;top:482.6px;width:25.2px;height:25.2px;color:#bb8471;stroke-width:2" viewBox="0 0 24 24"><path d="M6 2 3 6v14a2 2 0 0 0 2 2h14a2 2 0 0 0 2-2V6l-3-4Z"/><path d="M3 6h18"/><path d="M16 10a4 4 0 0 1-8 0"/></svg>
<div id="t85" class="t" style="top:539px;font-size:20.8px;line-height:20.8px;-webkit-text-stroke:0.94px currentColor;color:#231f1e;letter-spacing:2.00px;left:2465.0px;">View Orders</div>
<div id="t86" class="t" style="top:575px;font-size:18.4px;line-height:18.4px;color:#3e3b36;letter-spacing:1.49px;left:2465.0px;">Manage all orders</div>
</article>
<article>
<div class="b" style="left:2055.0px;top:640.1px;width:366.0px;height:176.7px;background:#e8ebdc;border-radius:12px;"></div>
<div class="b" style="left:2080.0px;top:665.1px;width:50.9px;height:50.9px;background:#e4d5c7;border-radius:13px;"></div>
<svg class="ic" style="left:2092.8px;top:677.9px;width:25.2px;height:25.2px;color:#bb8471;stroke-width:2" viewBox="0 0 24 24"><path d="M9 3H5a2 2 0 0 0-2 2v4m6-6h10a2 2 0 0 1 2 2v4M9 3v18m0 0h10a2 2 0 0 0 2-2V9M9 21H5a2 2 0 0 1-2-2V9m0 0h18"/></svg>
<div id="t87" class="t" style="top:734px;font-size:20.8px;line-height:20.8px;-webkit-text-stroke:0.94px currentColor;color:#231f1e;letter-spacing:2.58px;left:2080.0px;">Tables</div>
<div id="t88" class="t" style="top:770px;font-size:18.4px;line-height:18.4px;color:#3e3b36;letter-spacing:1.70px;left:2080.0px;">Manage tables</div>
</article>
<article>
<div class="b" style="left:2440.0px;top:640.1px;width:365.0px;height:176.7px;background:#e8ebdc;border-radius:12px;"></div>
<div class="b" style="left:2465.0px;top:665.1px;width:50.9px;height:50.9px;background:#e4d5c7;border-radius:13px;"></div>
<svg class="ic" style="left:2477.8px;top:677.9px;width:25.2px;height:25.2px;color:#bb8471;stroke-width:2" viewBox="0 0 24 24"><path d="m16 2-2.3 2.3a3 3 0 0 0 0 4.2l1.8 1.8a3 3 0 0 0 4.2 0L22 8"/><path d="M15 15 3.3 3.3a4.2 4.2 0 0 0 0 6l7.3 7.3c.7.7 2 .7 2.8 0L15 15Zm0 0 7 7"/><path d="m2.1 21.8 6.4-6.3"/><path d="m19 5-7 7"/></svg>
<div id="t89" class="t" style="top:734px;font-size:20.8px;line-height:20.8px;-webkit-text-stroke:0.94px currentColor;color:#231f1e;letter-spacing:2.99px;left:2465.0px;">Menu</div>
<div id="t90" class="t" style="top:770px;font-size:18.4px;line-height:18.4px;color:#3e3b36;letter-spacing:1.52px;left:2465.0px;">Manage dishes &amp; addons</div>
</article>
<article>
<div class="b" style="left:2055.0px;top:835.5px;width:366.0px;height:176.7px;background:#e8ebdc;border-radius:12px;"></div>
<div class="b" style="left:2080.0px;top:860.5px;width:50.9px;height:50.9px;background:#e4d5c7;border-radius:13px;"></div>
<svg class="ic" style="left:2092.8px;top:873.3px;width:25.2px;height:25.2px;color:#bb8471;stroke-width:2" viewBox="0 0 24 24"><path d="M4 2v20l2-1 2 1 2-1 2 1 2-1 2 1 2-1 2 1V2l-2 1-2-1-2 1-2-1-2 1-2-1-2 1Z"/><path d="M16 8h-6a2 2 0 1 0 0 4h4a2 2 0 1 1 0 4H8"/><path d="M12 17.5v-11"/></svg>
<div id="t91" class="t" style="top:930px;font-size:20.8px;line-height:20.8px;-webkit-text-stroke:0.94px currentColor;color:#231f1e;letter-spacing:1.88px;left:2080.0px;">Billing</div>
<div id="t92" class="t" style="top:965px;font-size:18.4px;line-height:18.4px;color:#3e3b36;letter-spacing:1.22px;left:2080.0px;">Generate bills</div>
</article>
<article>
<div class="b" style="left:2440.0px;top:835.5px;width:365.0px;height:176.7px;background:#e8ebdc;border-radius:12px;"></div>
<div class="b" style="left:2465.0px;top:860.5px;width:50.9px;height:50.9px;background:#e4d5c7;border-radius:13px;"></div>
<svg class="ic" style="left:2477.8px;top:873.3px;width:25.2px;height:25.2px;color:#bb8471;stroke-width:2" viewBox="0 0 24 24"><path d="M16 21v-2a4 4 0 0 0-4-4H6a4 4 0 0 0-4 4v2"/><circle cx="9" cy="7" r="4"/><path d="M22 21v-2a4 4 0 0 0-3-3.87"/><path d="M16 3.13a4 4 0 0 1 0 7.75"/></svg>
<div id="t93" class="t" style="top:930px;font-size:20.8px;line-height:20.8px;-webkit-text-stroke:0.94px currentColor;color:#231f1e;letter-spacing:1.55px;left:2465.0px;">Users</div>
<div id="t94" class="t" style="top:965px;font-size:18.4px;line-height:18.4px;color:#3e3b36;letter-spacing:1.65px;left:2465.0px;">Manage staff</div>
</article>
<article>
<div class="b" style="left:2055.0px;top:1030.8px;width:366.0px;height:176.7px;background:#e8ebdc;border-radius:12px;"></div>
<div class="b" style="left:2080.0px;top:1055.8px;width:50.9px;height:50.9px;background:#e4d5c7;border-radius:13px;"></div>
<svg class="ic" style="left:2092.8px;top:1068.7px;width:25.2px;height:25.2px;color:#bb8471;stroke-width:2" viewBox="0 0 24 24"><path d="M3 3v18h18"/><path d="M18 17V9"/><path d="M13 17V5"/><path d="M8 17v-3"/></svg>
<div id="t95" class="t" style="top:1125px;font-size:20.8px;line-height:20.8px;-webkit-text-stroke:0.94px currentColor;color:#231f1e;letter-spacing:2.60px;left:2080.0px;">Analytics</div>
<div id="t96" class="t" style="top:1161px;font-size:18.4px;line-height:18.4px;color:#3e3b36;letter-spacing:1.28px;left:2080.0px;">View reports</div>
</article>
<article>
<div class="b" style="left:2440.0px;top:1030.8px;width:365.0px;height:176.7px;background:#e8ebdc;border-radius:12px;"></div>
<div class="b" style="left:2465.0px;top:1055.8px;width:50.9px;height:50.9px;background:#e4d5c7;border-radius:13px;"></div>
<svg class="ic" style="left:2477.8px;top:1068.7px;width:25.2px;height:25.2px;color:#bb8471;stroke-width:2" viewBox="0 0 24 24"><path d="M22 7 13.5 15.5 8.5 10.5 2 17"/><path d="M16 7h6v6"/></svg>
<div id="t97" class="t" style="top:1125px;font-size:20.8px;line-height:20.8px;-webkit-text-stroke:0.94px currentColor;color:#231f1e;letter-spacing:2.21px;left:2465.0px;">History</div>
<div id="t98" class="t" style="top:1161px;font-size:18.4px;line-height:18.4px;color:#3e3b36;letter-spacing:1.23px;left:2465.0px;">Order history</div>
</article>
<div class="b" style="left:2055.0px;top:1244.8px;width:750.0px;height:1.2px;background:#e9e7dc;"></div>
<div id="t99" class="t" style="top:1289px;font-size:18.2px;line-height:18.2px;color:#62645a;letter-spacing:1.28px;left:2055.0px;"><b>Admin Tip:</b> Use the sidebar to quickly navigate between sections, or use these</div>
<div id="t100" class="t" style="top:1314px;font-size:18.2px;line-height:18.2px;color:#62645a;letter-spacing:1.45px;left:2055.0px;">quick action buttons to access key features.</div>
</section>
</main>
</body>
</html>
